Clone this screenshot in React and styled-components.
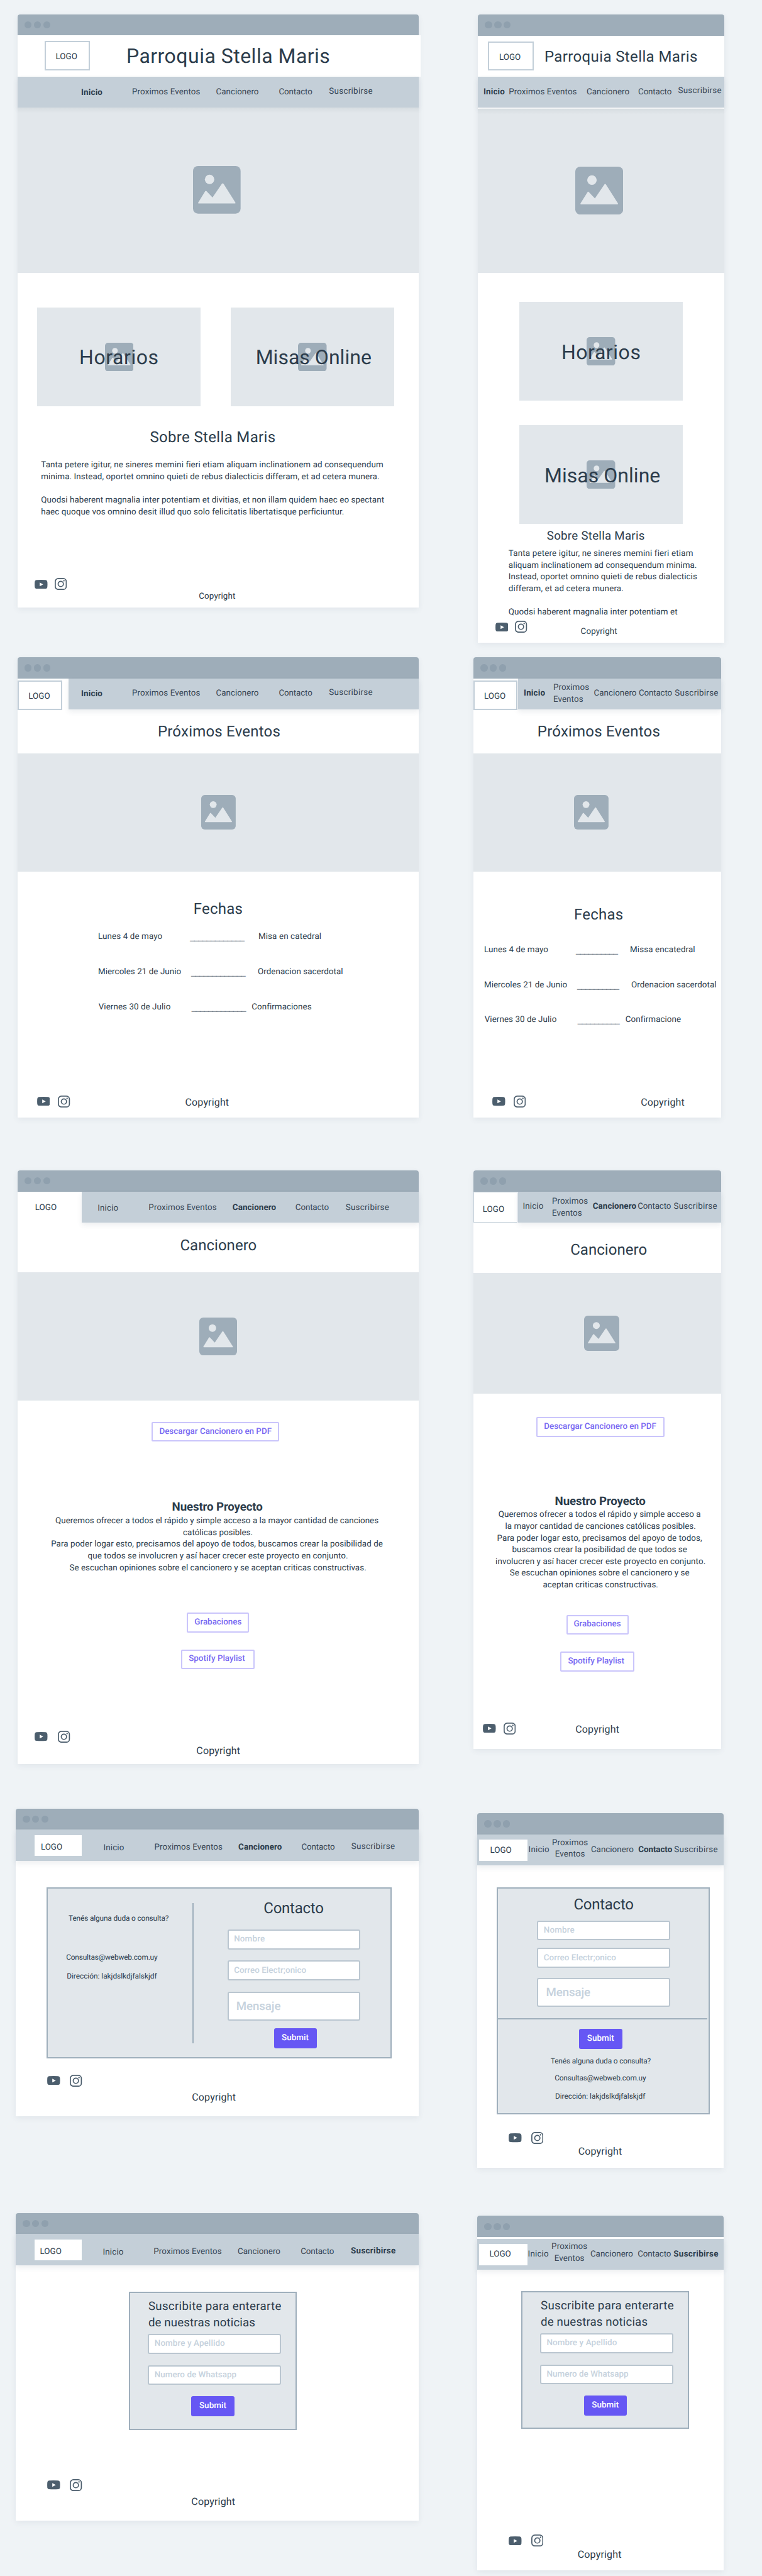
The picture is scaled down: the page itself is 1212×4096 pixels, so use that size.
import React from "react";
import styled, { createGlobalStyle } from "styled-components";

const GlobalStyle = createGlobalStyle`
  body {
    margin: 0;
    background: #eff3f6;
    color: #2c3c4b;
    font-family: Roboto, "Liberation Sans", sans-serif;
    text-rendering: geometricPrecision;
  }
  *, *::before, *::after { box-sizing: border-box; }
  button { text-rendering: inherit; }
`;

const Board = styled.main`
  display: flex;
  align-items: flex-start;
  width: 1212px;
  height: 4096px;
  overflow: hidden;
`;

const Column = styled.section`
  display: flex;
  flex-direction: column;
  align-items: flex-start;
  flex: none;
  width: ${(p) => p.$w}px;
`;

/* ---------- browser window ---------- */

const Frame = styled.article`
  display: flex;
  flex-direction: column;
  align-items: flex-start;
  flex: none;
  width: ${(p) => p.$w}px;
  height: ${(p) => p.$h}px;
  margin: ${(p) => p.$mt}px 0 0 ${(p) => p.$ml}px;
  background: #fff;
  border-radius: 4px 4px 0 0;
  box-shadow: 0 3px 10px rgba(60, 80, 100, 0.08);
`;

const TitleBar = styled.div`
  display: flex;
  align-items: center;
  gap: 3.5px;
  flex: none;
  width: 100%;
  height: ${(p) => p.$h}px;
  padding-left: 11.3px;
  background: #9eadb9;
  border-radius: 4px 4px 0 0;
`;

const Dot = styled.i`
  width: 11.4px;
  height: 11.4px;
  border-radius: 50%;
  background: #8fa0ae;
`;

function Chrome({ h }) {
  return (
    <TitleBar $h={h}>
      <Dot />
      <Dot />
      <Dot />
    </TitleBar>
  );
}

/* ---------- text ---------- */

const LINE = { 11.9: 16, 13.4: 18, 16: 20, 18.7: 26, 24: 30, 32: 40 };

const Text = styled.div`
  flex: none;
  margin: ${(p) => p.$mt || 0}px 0 0 ${(p) => p.$ml || 0}px;
  font-size: ${(p) => p.$size || 13.4}px;
  line-height: ${(p) => p.$lh || LINE[p.$size || 13.4]}px;
  font-weight: ${(p) => p.$weight || 400};
  letter-spacing: ${(p) => p.$ls || 0}px;
  white-space: nowrap;
`;

const Paragraph = styled(Text)`
  ${(p) => p.$center && `width: 100%; margin-left: 0; padding-left: ${p.$shift || 0}px; text-align: center;`}
`;

const Line = styled.span`
  display: block;
  min-height: ${(p) => p.$h}px;
  padding-right: ${(p) => (p.$wrapped ? 3 : 0)}px;
  letter-spacing: ${(p) => p.$ls || 0}px;
`;

function Lines({ lines, pitch, ...rest }) {
  return (
    <Paragraph $lh={pitch} {...rest}>
      {lines.map(([text, spacing, wrapped], i) => (
        <Line key={i} $h={pitch} $ls={spacing} $wrapped={wrapped}>
          {text}
        </Line>
      ))}
    </Paragraph>
  );
}

/* ---------- header and navigation ---------- */

const Header = styled.header`
  display: flex;
  align-items: flex-start;
  flex: none;
  width: ${(p) => p.$w}px;
  height: ${(p) => p.$h}px;
  background: #fff;
`;

const LogoBox = styled.div`
  flex: none;
  width: ${(p) => p.$w}px;
  height: ${(p) => p.$h}px;
  margin: ${(p) => p.$mt || 0}px 0 0 ${(p) => p.$ml || 0}px;
  padding: ${(p) => p.$py}px 0 0 ${(p) => p.$px}px;
  border: ${(p) => p.$border || 0}px solid #c3cfd9;
  background: #fff;
  font-size: 13.4px;
  line-height: 18px;
`;

const NavRow = styled.div`
  display: flex;
  align-items: flex-start;
  flex: none;
  width: 100%;
  height: ${(p) => p.$h}px;
  margin-top: ${(p) => p.$mt || 0}px;
`;

const LogoZone = styled.div`
  flex: none;
  width: ${(p) => p.$w}px;
  height: 100%;
  background: #fff;
`;

const NavBar = styled.nav`
  display: grid;
  grid-template-columns: ${(p) => p.$cols};
  align-items: start;
  flex: 1;
  height: 100%;
  background: #c4cfd8;
  box-shadow: 0 4px 8px rgba(60, 80, 100, 0.09);
`;

const NavItem = styled.a`
  margin-top: ${(p) => p.$y}px;
  width: max-content;
  font-size: 13.4px;
  line-height: ${(p) => (p.$stacked ? 18.7 : 18)}px;
  font-weight: ${(p) => (p.$active ? 700 : 400)};
  letter-spacing: ${(p) => p.$ls}px;
  text-align: ${(p) => p.$stacked || "left"};
  white-space: pre;
  color: ${(p) => (p.$active ? "#2c3c4b" : "#374655")};
`;

const NAV = ["Inicio", "Proximos Eventos", "Cancionero", "Contacto", "Suscribirse"];
const NAV_LS = [0.165, 0.089, 0.018, -0.158, 0.279];
const NAV_LS_ACTIVE = [0.179, 0.089, 0.078, -0.07, 0.305];

function Navigation({ h, mt, xs, ys, active, stacked, zone, tile }) {
  const cols = xs.map((x, i) => `${(i ? x - xs[i - 1] : x).toFixed(1)}px`).join(" ") + " auto";
  return (
    <NavRow $h={h} $mt={mt}>
      {zone}
      <NavBar $cols={cols}>
        <div>{tile}</div>
        {NAV.map((label, i) => (
          <NavItem
            key={label}
            $y={ys[i]}
            $active={active === i}
            $ls={(active === i ? NAV_LS_ACTIVE : NAV_LS)[i]}
            $stacked={i === 1 && stacked}
          >
            {i === 1 && stacked ? label.replace(" ", "\n") : label}
          </NavItem>
        ))}
      </NavBar>
    </NavRow>
  );
}

/* ---------- pictures ---------- */

const HeroArea = styled.div`
  display: flex;
  align-items: flex-start;
  flex: none;
  width: 100%;
  height: ${(p) => p.$h}px;
  margin-top: ${(p) => p.$mt || 0}px;
  padding: ${(p) => p.$py}px 0 0 ${(p) => p.$px}px;
  background: #e2e7eb;
`;

const HeroShade = styled(HeroArea)`
  background: linear-gradient(#d7dde1, #e2e7eb 9px);
`;

const PictureSvg = styled.svg`
  display: block;
  width: ${(p) => p.$size}px;
  height: ${(p) => p.$size}px;
`;

function Picture({ size }) {
  return (
    <PictureSvg $size={size} viewBox="0 0 100 100">
      <rect width="100" height="100" rx="10.5" fill="#9eadb9" />
      <circle cx="34.8" cy="28" r="9.9" fill="#e2e7eb" />
      <path
        d="M12 78.7 Q9.8 78.7 11 76.6 L25.6 53 Q27 51.2 28.4 53 L41 66.2 L60.6 37.4 Q62.4 35 64.2 37.4 L89 76.6 Q90 78.7 88 78.7 Z"
        fill="#e2e7eb"
      />
    </PictureSvg>
  );
}

const Cards = styled.div`
  display: flex;
  flex-direction: ${(p) => p.$dir || "row"};
  flex: none;
  gap: ${(p) => p.$gap}px;
  margin: ${(p) => p.$mt}px 0 0 ${(p) => p.$ml}px;
`;

const Card = styled.div`
  display: grid;
  place-items: center;
  width: 259.8px;
  height: 156.4px;
  background: #e2e7eb;
  > * { grid-area: 1 / 1; }
`;

const CardLabel = styled.span`
  padding: 2px 0 0 ${(p) => p.$dx}px;
  font-size: 32px;
  line-height: 40px;
  letter-spacing: ${(p) => p.$ls}px;
`;

function CardPair() {
  return (
    <>
      <Card>
        <Picture size={45.5} />
        <CardLabel $ls={0.56} $dx={0}>Horarios</CardLabel>
      </Card>
      <Card>
        <Picture size={45.5} />
        <CardLabel $ls={0.026} $dx={4}>Misas Online</CardLabel>
      </Card>
    </>
  );
}

/* ---------- event dates ---------- */

const DateRow = styled.div`
  display: grid;
  grid-template-columns: ${(p) => p.$b - p.$a}px ${(p) => p.$c - p.$b}px auto;
  margin: ${(p) => p.$mt}px 0 0 ${(p) => p.$a}px;
  height: 18px;
  flex: none;
  font-size: 13.4px;
  line-height: 18px;
  letter-spacing: ${(p) => p.$ls}px;
  white-space: nowrap;
`;

const Blank = styled.span`
  font-family: "Liberation Sans", sans-serif;
  font-size: 13.4px;
  line-height: 17px;
  letter-spacing: -0.84px;
  color: #5b6874;
`;

/* ---------- buttons and form ---------- */

const OutlineButton = styled.button`
  display: block;
  flex: none;
  width: ${(p) => p.$w}px;
  height: 31.8px;
  margin: ${(p) => p.$mt}px 0 0 ${(p) => p.$ml}px;
  padding: 0 0 0 ${(p) => p.$pad}px;
  border: 2px solid #cac5fb;
  border-radius: 2px;
  background: #fff;
  color: #7869f2;
  font: 500 13.4px/18px Roboto, sans-serif;
  text-align: left;
  white-space: nowrap;
`;

const SubmitButton = styled.button`
  display: block;
  flex: none;
  width: ${(p) => p.$w}px;
  height: 32px;
  margin: ${(p) => p.$mt}px 0 0 ${(p) => p.$ml}px;
  padding: 0;
  border: 0;
  border-radius: 3px;
  background: #6657f4;
  color: #fff;
  font: 500 13.4px/18px Roboto, sans-serif;
  letter-spacing: 0.083px;
`;

const Panel = styled.div`
  display: flex;
  flex-direction: ${(p) => p.$dir || "column"};
  align-items: flex-start;
  flex: none;
  width: ${(p) => p.$w}px;
  height: ${(p) => p.$h}px;
  margin: ${(p) => p.$mt}px 0 0 ${(p) => p.$ml}px;
  border: 2px solid #9fafbc;
  background: #e2e7eb;
`;

const PanelSide = styled.div`
  display: flex;
  flex-direction: column;
  align-items: flex-start;
  width: ${(p) => p.$w}px;
`;

const Rule = styled.div`
  flex: none;
  width: ${(p) => p.$w}px;
  height: ${(p) => p.$h}px;
  margin-top: ${(p) => p.$mt}px;
  background: #9fafbc;
`;

const Field = styled.div`
  display: flex;
  align-items: center;
  flex: none;
  width: 211.8px;
  height: ${(p) => p.$h || 31.6}px;
  margin: ${(p) => p.$mt}px 0 0 ${(p) => p.$ml}px;
  padding-left: ${(p) => (p.$big ? 12.2 : 8.5)}px;
  border: 2px solid #bac6d0;
  border-radius: 3px;
  background: #fff;
  color: #c6d2dd;
  font-size: ${(p) => (p.$big ? 18.7 : 13.4)}px;
  font-weight: 500;
  letter-spacing: ${(p) => p.$ls || 0}px;
  white-space: nowrap;
`;

/* ---------- footer ---------- */

const FooterRow = styled.footer`
  display: flex;
  align-items: flex-start;
  flex: none;
  margin: ${(p) => p.$mt}px 0 0 ${(p) => p.$ml}px;
`;

const Social = styled.div`
  display: flex;
  align-items: center;
  gap: ${(p) => p.$gap}px;
`;

const Icon = styled.svg`
  display: block;
  flex: none;
  width: ${(p) => p.$w}px;
  height: ${(p) => p.$h}px;
`;

function Footer({ mt, ml, gap, copyX, copyY, size = 16 }) {
  return (
    <FooterRow $mt={mt} $ml={ml}>
      <Social $gap={gap}>
        <Icon $w={20.6} $h={14.4} viewBox="0 0 20.6 14.4">
          <path
            d="M3 .3 Q10.3 -.2 17.6 .3 Q20 .5 20.3 3 Q20.7 7.2 20.3 11.4 Q20 13.9 17.6 14.1 Q10.3 14.6 3 14.1 Q.6 13.9 .3 11.4 Q-.1 7.2 .3 3 Q.6 .5 3 .3Z"
            fill="#4c5e6d"
          />
          <path d="M8.2 4.2 L13.7 7.2 L8.2 10.2Z" fill="#fff" />
        </Icon>
        <Icon $w={19.3} $h={19.1} viewBox="0 0 19.3 19.1" fill="none" stroke="#4c5e6d" strokeWidth="1.7">
          <rect x=".9" y=".9" width="17.5" height="17.3" rx="4.8" />
          <circle cx="9.65" cy="9.55" r="4.2" />
          <circle cx="14.7" cy="4.5" r="1.15" fill="#4c5e6d" stroke="none" />
        </Icon>
      </Social>
      <Text $size={size} $ls={size === 16 ? 0.16 : 0.105} $mt={copyY} $ml={copyX}>
        Copyright
      </Text>
    </FooterRow>
  );
}

/* ---------- screens ---------- */

function HomeWide() {
  return (
    <Frame $w={638} $h={943.3} $mt={23.2} $ml={27.6}>
      <Chrome h={32.9} />
      <Header $w={641} $h={65.6}>
        <LogoBox $w={72.6} $h={46.4} $mt={9.2} $ml={43.3} $border={2} $px={15.7} $py={14.5}>LOGO</LogoBox>
        <Text $size={32} $ls={0.485} $mt={13.4} $ml={57.4}>Parroquia Stella Maris</Text>
      </Header>
      <Navigation h={49.3} xs={[101.4, 182.5, 315.9, 416, 495.8]} ys={[17.2, 15.9, 15.9, 15.9, 15]} active={0} />
      <HeroShade $h={262.6} $px={279.4} $py={93.2}>
        <Picture size={75.7} />
      </HeroShade>
      <Cards $gap={47.6} $mt={55.7} $ml={31.9}>
        <CardPair />
      </Cards>
      <Text $size={24} $ls={0.342} $mt={34.4} $ml={210.8}>Sobre Stella Maris</Text>
      <Lines
        pitch={18.7}
        $mt={21}
        $ml={37.7}
        lines={[
          ["Tanta petere igitur, ne sineres memini fieri etiam aliquam inclinationem ad consequendum", 0.123],
          ["minima. Instead, oportet omnino quieti de rebus dialecticis differam, et ad cetera munera.", 0.092],
          [""],
          ["Quodsi haberent magnalia inter potentiam et divitias, et non illam quidem haec eo spectant", 0.071],
          ["haec quoque vos omnino desit illud quo solo felicitatis libertatisque perficiuntur.", 0.088],
        ]}
      />
      <Footer mt={94.7} ml={27.9} gap={10.9} copyX={210} copyY={20.3} size={13.4} />
    </Frame>
  );
}

function HomeNarrow() {
  return (
    <Frame $w={391.5} $h={999.3} $mt={23} $ml={80}>
      <Chrome h={33.6} />
      <Header $w={391.5} $h={65.2}>
        <LogoBox $w={72.8} $h={46.6} $mt={9.3} $ml={15.9} $border={2} $px={16} $py={14.7}>LOGO</LogoBox>
        <Text $size={24} $ls={0.382} $mt={18.7} $ml={17.2}>Parroquia Stella Maris</Text>
      </Header>
      <Navigation h={49.2} xs={[8.9, 49.2, 173.1, 255.1, 318.5]} ys={[16.6, 16, 16, 16, 14.6]} active={0} />
      <HeroShade $mt={2} $h={260.9} $px={155.1} $py={92.2}>
        <Picture size={76.2} />
      </HeroShade>
      <Cards $dir="column" $gap={39.5} $mt={46.6} $ml={66.3}>
        <CardPair />
      </Cards>
      <Text $size={18.7} $ls={0.276} $mt={6.7} $ml={109.8}>Sobre Stella Maris</Text>
      <Lines
        pitch={18.6}
        $mt={6.8}
        $ml={48.8}
        lines={[
          ["Tanta petere igitur, ne sineres memini fieri etiam", 0.171],
          ["aliquam inclinationem ad consequendum minima.", 0.064],
          ["Instead, oportet omnino quieti de rebus dialecticis", 0.067],
          ["differam, et ad cetera munera.", 0.157],
          [""],
          ["Quodsi haberent magnalia inter potentiam et", 0.091],
        ]}
      />
      <Footer mt={3.4} ml={27.9} gap={10.8} copyX={85} copyY={9.3} size={13.4} />
    </Frame>
  );
}

function EventsWide() {
  return (
    <Frame $w={638} $h={731.7} $mt={78.6} $ml={27.6}>
      <Chrome h={33.5} />
      <Navigation
        h={49.4}
        xs={[20.1, 101.2, 234.6, 334.7, 414.5]}
        ys={[16.4, 15.4, 15.4, 15.4, 14.5]}
        active={0}
        zone={
          <LogoZone $w={81.3}>
            <LogoBox $w={71.7} $h={47.1} $mt={3.8} $border={2} $px={15.7} $py={15}>LOGO</LogoBox>
          </LogoZone>
        }
      />
      <Text $size={24} $ls={0.214} $mt={20} $ml={223.3}>Próximos Eventos</Text>
      <HeroArea $mt={19.9} $h={188.1} $px={292.5} $py={66.4}>
        <Picture size={54.9} />
      </HeroArea>
      <Text $size={24} $ls={0.264} $mt={44.2} $ml={280.1}>Fechas</Text>
      <DateRow $mt={20.8} $a={128.3} $b={274.6} $c={383.3} $ls={0.12}>
        <span>Lunes 4 de mayo</span>
        <Blank>_____________</Blank>
        <span>Misa en catedral</span>
      </DateRow>
      <DateRow $mt={37.8} $a={128.3} $b={276.4} $c={382.4} $ls={0.06}>
        <span>Miercoles 21 de Junio</span>
        <Blank>_____________</Blank>
        <span>Ordenacion sacerdotal</span>
      </DateRow>
      <DateRow $mt={37.9} $a={129.2} $b={277.2} $c={372.7} $ls={0.06}>
        <span>Viernes 30 de Julio</span>
        <Blank>_____________</Blank>
        <span>Confirmaciones</span>
      </DateRow>
      <Footer mt={130.9} ml={31} gap={13.1} copyX={182.9} copyY={1} />
    </Frame>
  );
}

function EventsNarrow() {
  return (
    <Frame $w={394.6} $h={731.7} $mt={22.8} $ml={72.9}>
      <Chrome h={33.5} />
      <Navigation
        h={49.4}
        xs={[8.6, 55.4, 120, 191.5, 248.8]}
        ys={[15.4, 6.9, 15.4, 15.4, 15.4]}
        active={0}
        stacked="left"
        zone={
          <LogoZone $w={71.6}>
            <LogoBox $w={70.6} $h={47.1} $mt={3.8} $border={2} $px={15} $py={15}>LOGO</LogoBox>
          </LogoZone>
        }
      />
      <Text $size={24} $ls={0.214} $mt={20} $ml={101.9}>Próximos Eventos</Text>
      <HeroArea $mt={19.9} $h={188.1} $px={160.3} $py={66.4}>
        <Picture size={54.9} />
      </HeroArea>
      <Text $size={24} $ls={0.264} $mt={52.9} $ml={160}>Fechas</Text>
      <DateRow $mt={32.9} $a={17} $b={163.1} $c={249.2} $ls={0.1}>
        <span>Lunes 4 de mayo</span>
        <Blank>__________</Blank>
        <span>Missa encatedral</span>
      </DateRow>
      <DateRow $mt={37.8} $a={17} $b={165.1} $c={251.1} $ls={0.06}>
        <span>Miercoles 21 de Junio</span>
        <Blank>__________</Blank>
        <span>Ordenacion sacerdotal</span>
      </DateRow>
      <DateRow $mt={37.7} $a={17.9} $b={165.9} $c={241.9} $ls={0.06}>
        <span>Viernes 30 de Julio</span>
        <Blank>__________</Blank>
        <span>Confirmacione</span>
      </DateRow>
      <Footer mt={110.6} ml={30.4} gap={12.9} copyX={183.1} copyY={1} />
    </Frame>
  );
}

function SongbookWide() {
  return (
    <Frame $w={638} $h={944.1} $mt={84.2} $ml={27.6}>
      <Chrome h={33.7} />
      <Navigation
        h={49.2}
        xs={[24.9, 106.1, 239.6, 339.6, 419.4]}
        ys={[18.7, 17.5, 17.5, 17.5, 16.9]}
        active={2}
        zone={
          <LogoZone $w={102.7}>
            <LogoBox $w={90} $h={49} $px={28.2} $py={17.5}>LOGO</LogoBox>
          </LogoZone>
        }
      />
      <Text $size={24} $ls={0.034} $mt={20.9} $ml={258.8}>Cancionero</Text>
      <HeroArea $mt={28.2} $h={204.2} $px={289} $py={71.6}>
        <Picture size={60} />
      </HeroArea>
      <OutlineButton $mt={33.6} $ml={213.8} $w={203} $pad={10}>Descargar Cancionero en PDF</OutlineButton>
      <Text $size={18.7} $weight={700} $ls={-0.128} $mt={90.8} $ml={246}>Nuestro Proyecto</Text>
      <Lines
        pitch={18.7}
        $center
        $mt={0.7}
        lines={[
          ["Queremos ofrecer a todos el rápido y simple acceso a la mayor cantidad de canciones", 0.036, true],
          ["católicas posibles.", 0.005],
          ["Para poder logar esto, precisamos del apoyo de todos, buscamos crear la posibilidad de", 0.072, true],
          ["que todos se involucren y así hacer crecer este proyecto en conjunto.", 0.067],
          ["Se escuchan opiniones sobre el cancionero y se aceptan criticas constructivas.", 0.03],
        ]}
      />
      <OutlineButton $mt={60.5} $ml={269.8} $w={98.8} $pad={9.9}>Grabaciones</OutlineButton>
      <OutlineButton $mt={26.8} $ml={260.6} $w={117.2} $pad={10}>Spotify Playlist</OutlineButton>
      <Footer mt={97.7} ml={27.9} gap={16.2} copyX={200.8} copyY={21.8} />
    </Frame>
  );
}

function SongbookNarrow() {
  return (
    <Frame $w={394.6} $h={919.9} $mt={84.5} $ml={72.9}>
      <Chrome h={33.7} />
      <Navigation
        h={49.1}
        xs={[6.9, 53.5, 118.3, 189.7, 247]}
        ys={[15.3, 7, 15.3, 15.3, 15.3]}
        active={2}
        stacked="left"
        zone={
          <LogoZone $w={71.6}>
            <LogoBox $w={70.3} $h={49.4} $border={1} $px={13.9} $py={19.2}>LOGO</LogoBox>
          </LogoZone>
        }
      />
      <Text $size={24} $ls={0.034} $mt={28.3} $ml={154.3}>Cancionero</Text>
      <HeroArea $mt={22.1} $h={191.3} $px={176} $py={68}>
        <Picture size={56} />
      </HeroArea>
      <OutlineButton $mt={37.4} $ml={100.4} $w={203.3} $pad={10}>Descargar Cancionero en PDF</OutlineButton>
      <Text $size={18.7} $weight={700} $ls={-0.128} $mt={89.1} $ml={129.7}>Nuestro Proyecto</Text>
      <Lines
        pitch={18.6}
        $center
        $shift={10}
        $mt={0.4}
        lines={[
          ["Queremos ofrecer a todos el rápido y simple acceso a", 0.049, true],
          ["la mayor cantidad de canciones católicas posibles.", 0.01],
          ["Para poder logar esto, precisamos del apoyo de todos,", 0.077, true],
          ["buscamos crear la posibilidad de que todos se", 0.046, true],
          ["involucren y así hacer crecer este proyecto en conjunto.", 0.088],
          ["Se escuchan opiniones sobre el cancionero y se", 0.031, true],
          ["aceptan criticas constructivas.", 0.038],
        ]}
      />
      <OutlineButton $mt={37} $ml={147.7} $w={99.5} $pad={9.9}>Grabaciones</OutlineButton>
      <OutlineButton $mt={26.4} $ml={138.5} $w={117.9} $pad={10}>Spotify Playlist</OutlineButton>
      <Footer mt={81} ml={15.1} gap={12.5} copyX={94.9} copyY={1} />
    </Frame>
  );
}

function ContactWide() {
  return (
    <Frame $w={641.1} $h={488.5} $mt={71.2} $ml={24.9}>
      <Chrome h={32.9} />
      <Navigation
        h={49.9}
        xs={[139.5, 220.7, 354.2, 454.6, 534]}
        ys={[20.7, 20, 20, 20, 19.2]}
        active={2}
        tile={<LogoBox $w={75.6} $h={33.6} $mt={8.7} $ml={29.8} $px={10.2} $py={11.3}>LOGO</LogoBox>}
      />
      <Panel $dir="row" $w={548.9} $h={271.5} $mt={42} $ml={49.4}>
        <PanelSide $w={229.9}>
          <Text $size={11.9} $ls={-0.154} $mt={39.1} $ml={32.8}>Tenés alguna duda o consulta?</Text>
          <Text $size={11.9} $ls={-0.189} $mt={45.9} $ml={28.9}>Consultas@webweb.com.uy</Text>
          <Text $size={11.9} $ls={-0.028} $mt={14.3} $ml={29.9}>Dirección: lakjdslkdjfalskjdf</Text>
        </PanelSide>
        <Rule $w={2} $h={223} $mt={22.9} />
        <PanelSide $w={310}>
          <Text $size={24} $ls={-0.25} $mt={16} $ml={111.1}>Contacto</Text>
          <Field $mt={18.9} $ml={53.5} $ls={0.175}>Nombre</Field>
          <Field $mt={17.8} $ml={53.5} $ls={0.036}>Correo Electr;onico</Field>
          <Field $big $h={46.6} $mt={17.9} $ml={53.5} $ls={-0.096}>Mensaje</Field>
          <SubmitButton $mt={11.3} $ml={127.4} $w={68}>Submit</SubmitButton>
        </PanelSide>
      </Panel>
      <Footer mt={26} ml={50.3} gap={15.7} copyX={174.5} copyY={26.4} />
    </Frame>
  );
}

function ContactNarrow() {
  return (
    <Frame $w={391.6} $h={563.7} $mt={102.1} $ml={79}>
      <Chrome h={33.6} />
      <Navigation
        h={49.5}
        xs={[81.6, 119, 180.9, 256.3, 313.4]}
        ys={[16, 4.8, 16, 16, 16]}
        active={3}
        stacked="center"
        tile={<LogoBox $w={76.2} $h={33.6} $mt={8.5} $ml={3.4} $px={17.1} $py={8.3}>LOGO</LogoBox>}
      />
      <Panel $w={339} $h={361} $mt={34.6} $ml={30.8}>
        <Text $size={24} $ls={-0.25} $mt={10} $ml={120.6}>Contacto</Text>
        <Field $mt={10.7} $ml={62.5} $ls={0.175}>Nombre</Field>
        <Field $mt={12.2} $ml={62.5} $ls={0.036}>Correo Electr;onico</Field>
        <Field $big $h={46} $mt={15.8} $ml={62.5} $ls={-0.096}>Mensaje</Field>
        <Rule $w={333} $h={2} $mt={17.7} />
        <SubmitButton $mt={15.8} $ml={129.1} $w={68.8}>Submit</SubmitButton>
        <Text $size={11.9} $ls={-0.154} $mt={10.6} $ml={84}>Tenés alguna duda o consulta?</Text>
        <Text $size={11.9} $ls={-0.189} $mt={10.9} $ml={90.4}>Consultas@webweb.com.uy</Text>
        <Text $size={11.9} $ls={-0.028} $mt={13.6} $ml={91.2}>Dirección: lakjdslkdjfalskjdf</Text>
      </Panel>
      <Footer mt={28.1} ml={50.1} gap={15.4} copyX={55.3} copyY={21.1} />
    </Frame>
  );
}

function SubscribeWide() {
  return (
    <Frame $w={641.1} $h={488.8} $mt={154} $ml={24.9}>
      <Chrome h={33.6} />
      <Navigation
        h={49.3}
        xs={[138.6, 219.4, 353.1, 453.3, 533.2]}
        ys={[20.3, 19.2, 19.2, 19.2, 18.5]}
        active={4}
        tile={<LogoBox $w={75.6} $h={33.9} $mt={8.2} $ml={29.8} $px={8.9} $py={11}>LOGO</LogoBox>}
      />
      <Panel $w={266.8} $h={220} $mt={42.1} $ml={180.2}>
        <Lines
          pitch={26.3}
          $size={18.7}
          $mt={8.2}
          $ml={28.8}
          lines={[["Suscribite para enterarte", 0.315], ["de nuestras noticias", 0.131]]}
        />
        <Field $mt={4.6} $ml={28.2} $ls={0.112}>Nombre y Apellido</Field>
        <Field $mt={17.9} $ml={28.2} $ls={0.05}>Numero de Whatsapp</Field>
        <SubmitButton $mt={17.6} $ml={97.3} $w={68.2}>Submit</SubmitButton>
      </Panel>
      <Footer mt={78.1} ml={50.3} gap={15.7} copyX={173.6} copyY={25.9} />
    </Frame>
  );
}

function SubscribeNarrow() {
  return (
    <Frame $w={391.6} $h={563.6} $mt={76.5} $ml={79}>
      <Chrome h={34} />
      <Navigation
        h={48.6}
        mt={2.7}
        xs={[80.6, 118.1, 179.9, 255.2, 312.3]}
        ys={[15.5, 4.1, 15.5, 15.5, 15.5]}
        active={4}
        stacked="center"
        tile={<LogoBox $w={76.2} $h={34.1} $mt={8} $ml={3.4} $px={16.1} $py={8.2}>LOGO</LogoBox>}
      />
      <Panel $w={267.5} $h={219.7} $mt={34} $ml={69.8}>
        <Lines
          pitch={26}
          $size={18.7}
          $mt={8.4}
          $ml={29.2}
          lines={[["Suscribite para enterarte", 0.315], ["de nuestras noticias", 0.131]]}
        />
        <Field $mt={4.9} $ml={28.1} $ls={0.112}>Nombre y Apellido</Field>
        <Field $mt={17.9} $ml={28.1} $ls={0.05}>Numero de Whatsapp</Field>
        <SubmitButton $mt={17.5} $ml={97.8} $w={68.4}>Submit</SubmitButton>
      </Panel>
      <Footer mt={168} ml={50.1} gap={15.4} copyX={54.4} copyY={21.6} />
    </Frame>
  );
}

export default function App() {
  return (
    <>
      <GlobalStyle />
      <Board>
        <Column $w={680}>
          <HomeWide />
          <EventsWide />
          <SongbookWide />
          <ContactWide />
          <SubscribeWide />
        </Column>
        <Column $w={532}>
          <HomeNarrow />
          <EventsNarrow />
          <SongbookNarrow />
          <ContactNarrow />
          <SubscribeNarrow />
        </Column>
      </Board>
    </>
  );
}
